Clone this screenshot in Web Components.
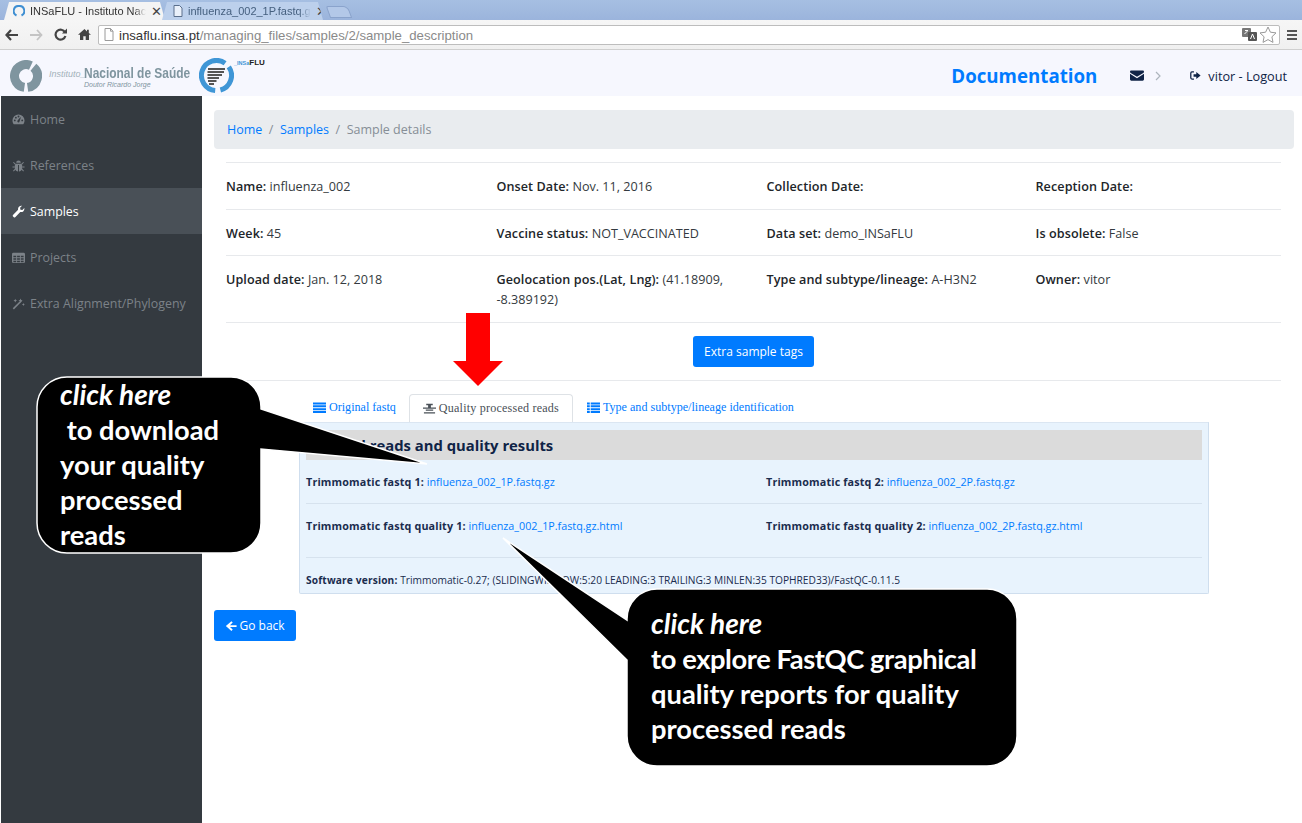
<!DOCTYPE html>
<html>
<head>
<meta charset="utf-8">
<title>INSaFLU - Sample details</title>
<style>
  html, body { margin: 0; height: 100%; }
  body { font-family: "Open Sans", sans-serif; background: #fff; overflow: hidden; position: relative; }
  .columns { display: flex; height: 727px; }
  .tight { letter-spacing: -.4px; }
</style>
</head>
<body>
<browser-chrome></browser-chrome>
<app-header></app-header>
<div class="columns">
  <side-nav></side-nav>
  <sample-page></sample-page>
</div>

<red-arrow></red-arrow>
<call-out style="left:37px;top:377px;width:224px;height:176px"
  d="M30 0H194A30 30 0 0 1 224 30V32L390 87L224 72V146A30 30 0 0 1 194 176H30A30 30 0 0 1 0 146V30A30 30 0 0 1 30 0Z"
  pad="23">
  <i>click here</i><br>&nbsp;to download<br>your quality<br>processed<br>reads
</call-out>
<call-out style="left:627px;top:589px;width:390px;height:177px"
  d="M30 0H360A30 30 0 0 1 390 30V147A30 30 0 0 1 360 177H30A30 30 0 0 1 0 147V71L-124 -51L0 31V30A30 30 0 0 1 30 0Z"
  pad="24" top="17">
  <i>click here</i><br><span class="tight">to explore FastQC graphical</span><br>quality reports for quality<br>processed reads
</call-out>

<script>
const ICONS = {
  dashboard: '<path d="M7 1.5A6.5 6.5 0 0 0 .5 8c0 1.6.5 2.9 1.4 4h10.2c.9-1.1 1.4-2.4 1.4-4A6.5 6.5 0 0 0 7 1.5zM3 9a1 1 0 1 1 0-2 1 1 0 0 1 0 2zm1.2-3a1 1 0 1 1 0-2 1 1 0 0 1 0 2zM7 4.800a1 1 0 1 1 0-2 1 1 0 0 1 0 2zm0 5.400a1.300 1.300 0 0 1-1-2.100l3-3.500.5.300-1.400 4.300a1.300 1.300 0 0 1-1.100 1zM11 9a1 1 0 1 1 0-2 1 1 0 0 1 0 2z"/>',
  bug: '<path d="M4.500 4a2.500 2.500 0 0 1 5 0zM3.800 5h6.400c.6.500.8 1.400.8 2.500v2.500C11 12 9 13.500 7.500 13.500V6.500h-1v7C5 13.500 3 12 3 10V7.500C3 6.400 3.200 5.500 3.800 5z"/><path d="M3.500 5.500 1.500 3.500M10.500 5.500l2-2M3 8.500H.5M11 8.500h2.500M3.500 11l-2 2M10.500 11l2 2" stroke="currentColor" stroke-width="1.100" fill="none"/>',
  wrench: '<path d="M13.300 3.300c.2 1.300-.2 2.500-1 3.300-.9.900-2.200 1.200-3.400.9L3.700 12.800a1.500 1.500 0 0 1-2.300-.2 1.500 1.500 0 0 1-.1-2.200l5.300-5.300C6.300 4 6.600 2.700 7.500 1.800 8.300 1 9.500.6 10.800.800L8.700 3l.4 2.100 2.100.4z"/>',
  table: '<path fill-rule="evenodd" d="M1.500 2h11A1.500 1.500 0 0 1 14 3.500v8a1.500 1.500 0 0 1-1.500 1.500h-11A1.500 1.500 0 0 1 0 11.500v-8A1.500 1.500 0 0 1 1.500 2zM1.500 5v1.800h3V5zm4 0v1.800h3V5zm4 0v1.800h3V5zm-8 2.800v1.600h3V7.800zm4 0v1.600h3V7.800zm4 0v1.600h3V7.800zm-8 2.600V12h3v-1.600zm4 0V12h3v-1.600zm4 0V12h3v-1.600z"/>',
  wand: '<path d="M.8 12.200 9.500 3.500l1.200 1.200L2 13.400z"/><path d="M9.200 1.500l.7 1.600 1.600.7-1.600.7-.7 1.600-.7-1.600-1.600-.7 1.600-.7zM3.500 2l.6 1.300 1.300.6-1.300.6-.6 1.300-.6-1.300-1.300-.6 1.300-.6zM12.300 6.500l.5 1.100 1.100.5-1.100.5-.5 1.100-.5-1.100-1.100-.5 1.100-.5z"/>',
  envelope: '<path d="M1.300 1.500h11.400c.7 0 1.300.5 1.300 1.200 0 .5-.3.900-.7 1.200L7 7.800.7 3.900C.3 3.600 0 3.200 0 2.700c0-.7.600-1.200 1.300-1.200z"/><path d="M0 4.800 7 9.200l7-4.400v5.500c0 .8-.6 1.400-1.300 1.400H1.300C.6 11.700 0 11.100 0 10.300z"/>',
  signout: '<path d="M5 2.500H2.500A1.500 1.500 0 0 0 1 4v6a1.500 1.500 0 0 0 1.500 1.500H5" fill="none" stroke="currentColor" stroke-width="1.600"/><path d="M4.500 5.300H8V2.500L13.500 7 8 11.500V8.700H4.500z"/>',
  list: '<path d="M0 1.500h14v2.200H0zM0 4.600h14v2.200H0zM0 7.700h14v2.200H0zM0 10.800h14V13H0z"/>',
  align: '<path d="M3.500 2h7v1.500h-7zM0 6h14v1.300H0zM3 8h8v1.300H3zM1 11h12v1.500H1zM5.500 3.500h3V6h-3z"/>',
  listdot: '<path d="M0 1.500h3v2.200H0zM4 1.500h10v2.200H4zM0 4.600h3v2.200H0zM4 4.600h10v2.200H4zM0 7.700h3v2.200H0zM4 7.700h10v2.200H4zM0 10.800h3V13H0zM4 10.800h10V13H4z"/>',
  back: '<path d="M7.500 1.500 9 3 5.800 6H13.500v2.200H5.800L9 11.200l-1.500 1.500L1 7z"/>'
};

class FaIcon extends HTMLElement {
  connectedCallback() {
    const size = this.getAttribute('size') || 13;
    this.attachShadow({mode: 'open'}).innerHTML = `
      <style>:host { display: inline-flex; flex: none; } svg { display: block; fill: currentColor; }</style>
      <svg width="${size}" height="${size}" viewBox="0 0 14 14">${ICONS[this.getAttribute('name')]}</svg>`;
  }
}
customElements.define('fa-icon', FaIcon);

class BrowserChrome extends HTMLElement {
  constructor() {
    super();
    this.attachShadow({mode: 'open'}).innerHTML = `
      <style>
        :host { display: block; height: 50px; font-family: "Liberation Sans", sans-serif; }
        .strip { height: 20px; background: linear-gradient(#a6bfe2, #9bb4dc); display: flex; align-items: flex-end; padding-left: 4px; box-sizing: border-box; }
        .tab { width: 161px; height: 18px; margin-right: -3px; display: flex; align-items: center; gap: 5px; box-sizing: border-box; padding: 0 11px 0 9px; font-size: 11px; color: #333; clip-path: polygon(0 100%, 5px 0, calc(100% - 5px) 0, 100% 100%); }
        .tab.on { background: #f4f4f4; }
        .tab.off { background: #bcd0ec; color: #46607f; padding: 0 14px 0 11px; }
        .tab span { flex: 1; white-space: nowrap; -webkit-mask-image: linear-gradient(to right, #000 90%, transparent); mask-image: linear-gradient(to right, #000 90%, transparent); }
        .tab b { font-weight: 400; font-size: 13px; color: #444; }
        .newtab { width: 22px; height: 12px; margin: 0 0 2px 8px; background: #b3c8e8; border: 1px solid #8aa3cc; border-radius: 2px 5px 0 0; box-sizing: border-box; transform: skewX(20deg); }
        .bar { height: 29px; background: linear-gradient(#f6f6f6, #f0f0f0); border-bottom: 1px solid #cfcfcf; display: flex; align-items: center; padding: 0 5px; }
        .nav { display: flex; align-items: center; gap: 11px; width: 93px; flex: none; }
        .url { flex: 1; height: 20px; margin-right: 7px; background: #fff; border: 1px solid #bdbdbd; border-radius: 2px; display: flex; align-items: center; box-sizing: border-box; padding: 0 2px 0 5px; font-size: 13.2px; color: #8a8a8a; white-space: nowrap; }
        .url em { font-style: normal; color: #333; }
        .url span { flex: 1; margin-left: 5px; padding-top: 1px; }
        .menu { width: 10px; display: block; flex: none; }
        svg { display: block; flex: none; }
      </style>
      <div class="strip">
        <div class="tab on">
          <svg width="12" height="12" viewBox="0 0 12 12"><path d="M3.500 10.500A5 5 0 0 1 6 1a5 5 0 0 1 2.500 9.500" fill="none" stroke="#3f8fd2" stroke-width="2"/></svg>
          <span>INSaFLU - Instituto Nac</span><b>✕</b>
        </div>
        <div class="tab off">
          <svg width="10" height="12" viewBox="0 0 10 12"><path d="M1 .5h5.500L9 3v8.500H1z" fill="#e9f0fa" stroke="#5a6f8c"/></svg>
          <span>influenza_002_1P.fastq.g</span><b>✕</b>
        </div>
        <div class="newtab"></div>
      </div>
      <div class="bar">
        <div class="nav">
          <svg width="13" height="12" viewBox="0 0 13 12"><path d="M6 1 1.500 6 6 11M2 6h11" fill="none" stroke="#444" stroke-width="2.200"/></svg>
          <svg width="14" height="12" viewBox="0 0 14 12"><path d="M8 1l4.500 5L8 11M12 6H1" fill="none" stroke="#c4c4c4" stroke-width="1.800"/></svg>
          <svg width="13" height="13" viewBox="0 0 13 13"><path d="M11 4.300A5 5 0 1 0 11.400 8" fill="none" stroke="#444" stroke-width="2.200"/><path d="M8 5.500h5V.5z" fill="#444"/></svg>
          <svg width="13" height="13" viewBox="0 0 13 13"><path d="M6.500 1 0 6.800h2V12h3.300V8.300h2.400V12H11V6.800h2L10.800 5V1.800H9v1.600z" fill="#444"/></svg>
        </div>
        <div class="url">
          <svg width="10" height="13" viewBox="0 0 10 13"><path d="M1 .5h5.500L9 3.200v9.300H1zM6.500.5v2.700H9" fill="#fff" stroke="#9a9a9a"/></svg>
          <span><em>insaflu.insa.pt</em>/managing_files/samples/2/sample_description</span>
          <svg width="15" height="13" viewBox="0 0 15 13"><rect x="0" y="0" width="9" height="9" rx="1" fill="#777"/><rect x="6" y="4" width="9" height="9" rx="1" fill="#555"/><path d="M3 2.500h3M2.500 6l3-3M8.500 11l2-5 2 5" stroke="#fff" fill="none"/></svg>
          <svg width="18" height="17" viewBox="0 0 18 17" style="margin-left:2px"><path d="M9 1l2.400 5.200 5.600.7-4.100 3.900 1.100 5.600L9 13.600l-5 2.800 1.100-5.600L1 6.900l5.600-.7z" fill="#fff" stroke="#999"/></svg>
        </div>
        <svg class="menu" height="10" viewBox="0 0 10 10"><path d="M0 0h10v2H0zM0 4h10v2H0zM0 8h10v2H0z" fill="#555"/></svg>
      </div>`;
  }
}
customElements.define('browser-chrome', BrowserChrome);

class AppHeader extends HTMLElement {
  constructor() {
    super();
    this.attachShadow({mode: 'open'}).innerHTML = `
      <style>
        :host { display: flex; align-items: center; height: 46px; box-sizing: border-box; padding-top: 5px; background: #f6f7fe; font-family: "Open Sans", sans-serif; color: #0f2346; }
        .logo1 { display: flex; align-items: center; margin: 1px 0 0 10px; }
        .inst { position: relative; width: 142px; height: 32px; margin-left: 7px; font-family: "Liberation Sans", sans-serif; color: #7f959f; white-space: nowrap; }
        .inst .a { position: absolute; left: 0; top: 9px; font-size: 9px; font-style: italic; color: #a3b2ba; }
        .inst .b { position: absolute; left: 35px; top: 5px; font-size: 14.400px; font-weight: 700; transform-origin: left; transform: scaleX(.83); }
        .inst .c { position: absolute; left: 35px; top: 21px; font-size: 7px; font-style: italic; }
        .logo2 { display: flex; margin-left: 8px; align-self: flex-start; margin-top: 3px; }
        .flu { font-family: "Liberation Sans", sans-serif; font-size: 8px; font-weight: 700; color: #222; white-space: nowrap; }
        .flu span { color: #3f96d6; font-size: 5.500px; }
        .doc { margin-left: auto; font-size: 18.700px; font-weight: 700; color: #007bff; }
        .env { margin-left: 33px; display: flex; }
        .chev { margin-left: 11px; color: #adb5bd; display: flex; }
        .out { margin-left: 29px; display: flex; align-items: center; gap: 7px; font-size: 12.700px; margin-right: 15px; }
      </style>
      <div class="logo1">
        <svg width="32" height="32" viewBox="0 0 32 32"><path d="M23.400 7.200A11.500 11.500 0 0 1 17.600 27.400M14.400 27.400A11.500 11.500 0 1 1 20.900 5.600" fill="none" stroke="#7f959f" stroke-width="9"/></svg>
        <div class="inst"><span class="a">Instituto_</span><span class="b">Nacional de Saúde</span><span class="c">Doutor Ricardo Jorge</span></div>
      </div>
      <div class="logo2">
        <svg width="35" height="35" viewBox="0 0 35 35"><path d="M29.800 8.900A15 15 0 0 1 21.400 32M16.200 32.400A15 15 0 1 1 26.100 5.200" fill="none" stroke="#3f96d6" stroke-width="5"/><path d="M9 10h17v2H9zM8.500 13H25v2H8.500zM8.500 16H23v2H8.500zM8.500 19H20v2H8.500zM9 22h8.500v2H9zM10 25h5v2h-5z" fill="#555"/></svg>
        <div class="flu"><span>_INSa</span>FLU</div>
      </div>
      <span class="doc">Documentation</span>
      <span class="env"><fa-icon name="envelope" size="14"></fa-icon></span>
      <span class="chev"><svg width="6" height="10" viewBox="0 0 6 10"><path d="M1 1l4 4-4 4" fill="none" stroke="currentColor" stroke-width="1.200"/></svg></span>
      <span class="out"><fa-icon name="signout" size="11"></fa-icon>vitor - Logout</span>`;
  }
}
customElements.define('app-header', AppHeader);

class NavItem extends HTMLElement {
  connectedCallback() {
    this.attachShadow({mode: 'open'}).innerHTML = `
      <style>
        :host { display: flex; align-items: center; height: 46px; gap: 5px; padding-left: 11px; color: #7c8288; font-size: 12.400px; }
        :host([active]) { background: #495057; color: #fff; }
      </style>
      <fa-icon name="${this.getAttribute('icon')}" size="13"></fa-icon><slot></slot>`;
  }
}
customElements.define('nav-item', NavItem);

class SideNav extends HTMLElement {
  constructor() {
    super();
    this.attachShadow({mode: 'open'}).innerHTML = `
      <style>
        :host { display: block; width: 201px; flex: none; margin-left: 1px; background: #343a40; font-family: "Open Sans", sans-serif; }
      </style>
      <nav-item icon="dashboard">Home</nav-item>
      <nav-item icon="bug">References</nav-item>
      <nav-item icon="wrench" active>Samples</nav-item>
      <nav-item icon="table">Projects</nav-item>
      <nav-item icon="wand">Extra Alignment/Phylogeny</nav-item>`;
  }
}
customElements.define('side-nav', SideNav);

class InfoCell extends HTMLElement {
  connectedCallback() {
    this.attachShadow({mode: 'open'}).innerHTML = `
      <style>
        :host { display: block; padding: 14px 12px 11.500px 0; font-size: 12.600px; line-height: 20px; color: #343a40; }
        b { font-weight: 600; color: #212529; letter-spacing: .08px; }
      </style>
      <b>${this.getAttribute('label')}:</b> <slot></slot>`;
  }
}
customElements.define('info-cell', InfoCell);

class InfoTable extends HTMLElement {
  constructor() {
    super();
    this.attachShadow({mode: 'open'}).innerHTML = `
      <style>
        :host { display: block; margin: 0 13px 0 12px; border-bottom: 1px solid #e7e9ec; }
        .row { display: grid; grid-template-columns: 270.500px 270px 269px 1fr; border-top: 1px solid #e7e9ec; }
      </style>
      <div class="row">
        <info-cell label="Name">influenza_002</info-cell>
        <info-cell label="Onset Date">Nov. 11, 2016</info-cell>
        <info-cell label="Collection Date"></info-cell>
        <info-cell label="Reception Date"></info-cell>
      </div>
      <div class="row">
        <info-cell label="Week">45</info-cell>
        <info-cell label="Vaccine status">NOT_VACCINATED</info-cell>
        <info-cell label="Data set">demo_INSaFLU</info-cell>
        <info-cell label="Is obsolete">False</info-cell>
      </div>
      <div class="row">
        <info-cell label="Upload date">Jan. 12, 2018</info-cell>
        <info-cell label="Geolocation pos.(Lat, Lng)">(41.18909, -8.389192)</info-cell>
        <info-cell label="Type and subtype/lineage">A-H3N2</info-cell>
        <info-cell label="Owner">vitor</info-cell>
      </div>`;
  }
}
customElements.define('info-table', InfoTable);

class BlueButton extends HTMLElement {
  constructor() {
    super();
    this.attachShadow({mode: 'open'}).innerHTML = `
      <style>
        :host { display: inline-flex; align-items: center; gap: 3px; height: 31px; padding: 0 11px; box-sizing: border-box; background: #007bff; color: #fff; border-radius: 3px; font-size: 12px; font-weight: 500; white-space: nowrap; }
      </style>
      <slot></slot>`;
  }
}
customElements.define('blue-button', BlueButton);

class FilePanel extends HTMLElement {
  constructor() {
    super();
    this.attachShadow({mode: 'open'}).innerHTML = `
      <style>
        :host { display: block; width: 910px; height: 172.500px; box-sizing: border-box; padding: 7px 6px 0; background: #e8f3fd; border: 1px solid #cfdeee; border-top-color: #dbe6f2; border-radius: 0 0 2px 2px; font-size: 10.750px; color: #1a2c4e; }
        h3 { margin: 0; height: 30px; line-height: 31px; background: #dbdbdb; font-size: 14.800px; font-weight: 700; color: #0f2346; text-indent: -7px; }
        .row { display: grid; grid-template-columns: 460px 1fr; border-bottom: 1px solid #d6e2ee; align-items: start; padding-top: 14px; line-height: 16px; }
        .r1 { height: 44px; box-sizing: border-box; }
        .r2 { height: 54px; box-sizing: border-box; padding-top: 14px; }
        .ver { padding-top: 14px; line-height: 16px; font-size: 10.200px; white-space: nowrap; }
        b { font-weight: 700; letter-spacing: .15px; }
        a { color: #007bff; text-decoration: none; }
      </style>
      <h3>Trimmed reads and quality results</h3>
      <div class="row r1">
        <span><b>Trimmomatic fastq 1:</b> <a>influenza_002_1P.fastq.gz</a></span>
        <span><b>Trimmomatic fastq 2:</b> <a>influenza_002_2P.fastq.gz</a></span>
      </div>
      <div class="row r2">
        <span><b>Trimmomatic fastq quality 1:</b> <a>influenza_002_1P.fastq.gz.html</a></span>
        <span><b>Trimmomatic fastq quality 2:</b> <a>influenza_002_2P.fastq.gz.html</a></span>
      </div>
      <div class="ver"><b>Software version:</b> Trimmomatic-0.27; (SLIDINGWINDOW:5:20 LEADING:3 TRAILING:3 MINLEN:35 TOPHRED33)/FastQC-0.11.5</div>`;
  }
}
customElements.define('file-panel', FilePanel);

class TabStrip extends HTMLElement {
  constructor() {
    super();
    this.attachShadow({mode: 'open'}).innerHTML = `
      <style>
        :host { display: flex; height: 28px; font-family: "Liberation Serif", serif; font-size: 12.100px; color: #007bff; }
        .tab { display: flex; align-items: center; gap: 3px; padding: 0 14px; box-sizing: border-box; white-space: nowrap; }
        .first { padding-right: 13px; }
        .on { background: #fff; color: #495057; border: 1px solid #dee2e6; border-bottom: 0; border-radius: 4px 4px 0 0; padding: 0 13px; letter-spacing: .2px; }
      </style>
      <div class="tab first"><fa-icon name="list" size="13"></fa-icon>Original fastq</div>
      <div class="tab on"><fa-icon name="align" size="13"></fa-icon>Quality processed reads</div>
      <div class="tab"><fa-icon name="listdot" size="13"></fa-icon>Type and subtype/lineage identification</div>`;
  }
}
customElements.define('tab-strip', TabStrip);

class SamplePage extends HTMLElement {
  constructor() {
    super();
    this.attachShadow({mode: 'open'}).innerHTML = `
      <style>
        :host { flex: 1; display: block; padding: 14px 8px 0 12px; min-width: 0; font-family: "Open Sans", sans-serif; }
        .crumbs { display: flex; align-items: center; gap: 6.500px; height: 39px; padding: 0 13px 1px; box-sizing: border-box; background: #e9ecef; border-radius: 4px; margin-bottom: 13px; font-size: 12.500px; color: #868e96; }
        .crumbs a { color: #007bff; }
        .tags { display: flex; justify-content: center; padding: 13.500px 0 12.500px; margin: 0 13px 0 12px; border-bottom: 1px solid #e7e9ec; }
        .tabs { margin: 13px 0 0 85px; }
        .back { display: block; margin-top: 16px; }
      </style>
      <div class="crumbs"><a>Home</a><span>/</span><a>Samples</a><span>/</span><span>Sample details</span></div>
      <info-table></info-table>
      <div class="tags"><blue-button>Extra sample tags</blue-button></div>
      <div class="tabs">
        <tab-strip></tab-strip>
        <file-panel></file-panel>
      </div>
      <div class="back"><blue-button style="padding:0 11.500px 0 10.500px"><fa-icon name="back" size="12"></fa-icon>Go back</blue-button></div>`;
  }
}
customElements.define('sample-page', SamplePage);

class RedArrow extends HTMLElement {
  constructor() {
    super();
    this.attachShadow({mode: 'open'}).innerHTML = `
      <style>:host { position: absolute; left: 453px; top: 313px; width: 50px; height: 73px; } svg { display: block; }</style>
      <svg width="50" height="73" viewBox="0 0 50 73"><path d="M13 0H37V48H50L25 73L0 48H13Z" fill="#f00"/></svg>`;
  }
}
customElements.define('red-arrow', RedArrow);

class CallOut extends HTMLElement {
  connectedCallback() {
    this.attachShadow({mode: 'open'}).innerHTML = `
      <style>
        :host { position: absolute; display: block; font-family: Lato, sans-serif; font-weight: 700; font-size: 27.300px; line-height: 35px; color: #fff; white-space: nowrap; }
        svg { position: absolute; left: 0; top: 0; overflow: visible; }
        .text { position: relative; padding: ${this.getAttribute('top') || 0}px 0 0 ${this.getAttribute('pad')}px; }
        ::slotted(i) { font-size: 28px; }
      </style>
      <svg width="100%" height="100%"><path d="${this.getAttribute('d')}" fill="#000" stroke="#fff" stroke-width="1.500"/></svg>
      <div class="text"><slot></slot></div>`;
  }
}
customElements.define('call-out', CallOut);
</script>
</body>
</html>
